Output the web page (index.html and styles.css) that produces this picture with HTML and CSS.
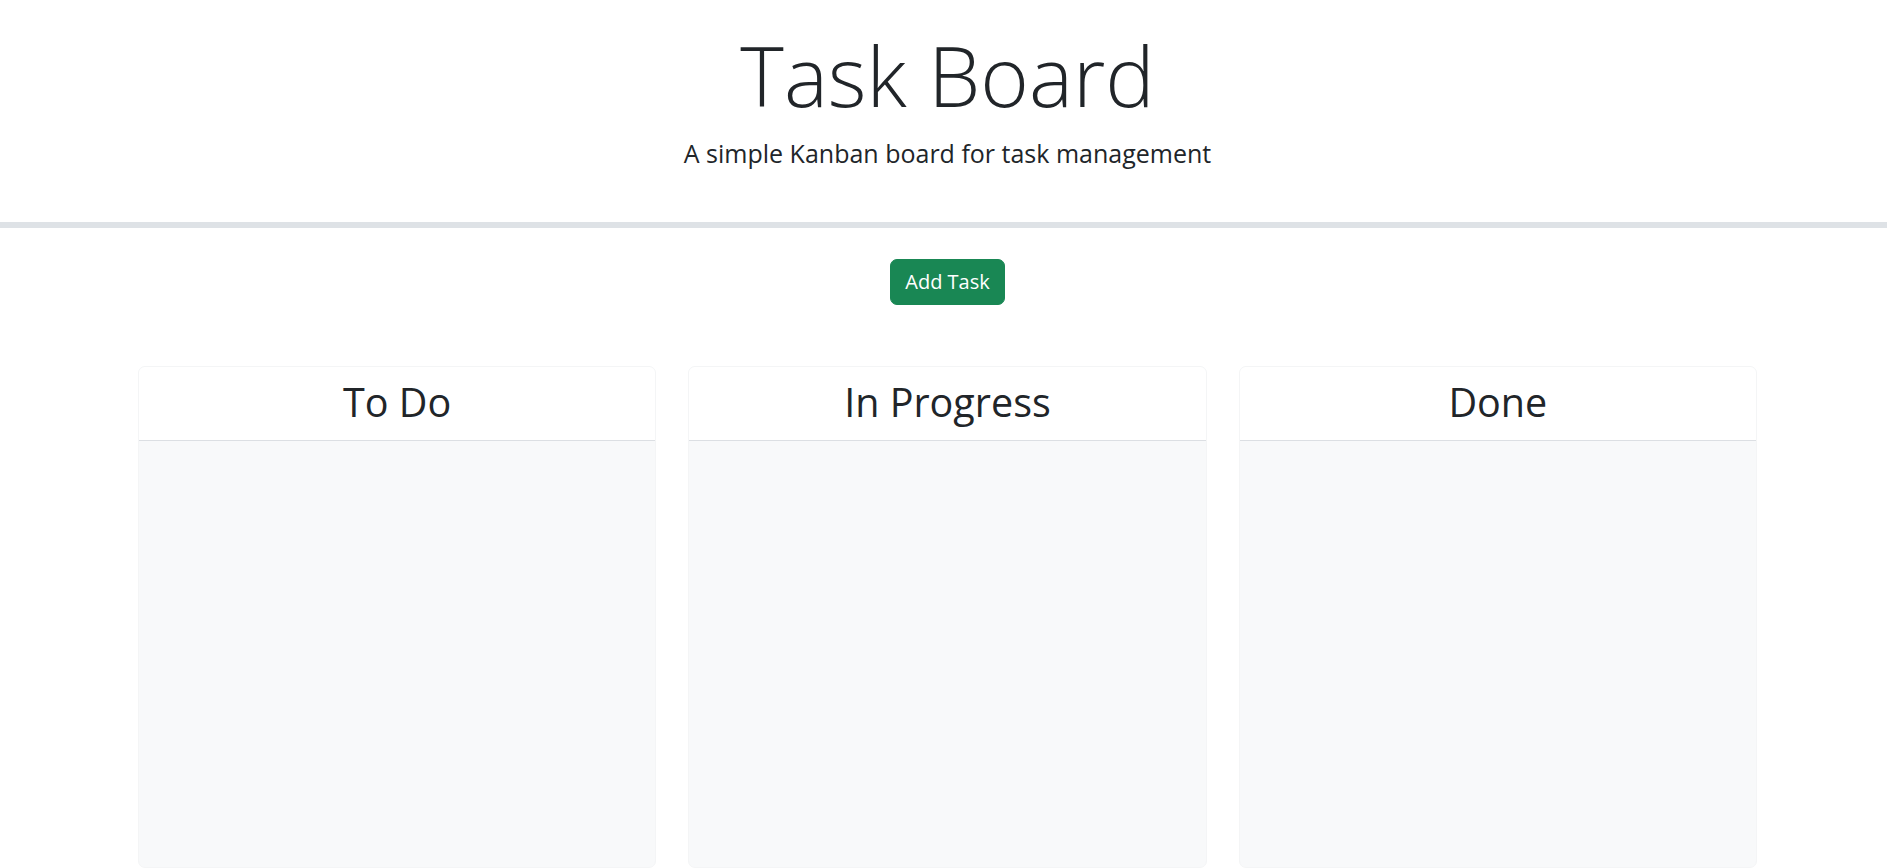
FILE: index.html
```html
<!DOCTYPE html>
<html lang="en">
<head>
<meta charset="utf-8">
<title>Task Board</title>
<link rel="stylesheet" href="styles.css">
</head>
<body>
<header class="page-header">
  <h1 class="title">Task Board</h1>
  <p class="lead">A simple Kanban board for task management</p>
</header>
<main class="board-wrap">
  <div class="actions">
    <button class="btn-add" type="button">Add Task</button>
  </div>
  <div class="board">
    <section class="column">
      <div class="column-header"><h2 class="column-title">To Do</h2></div>
      <div class="column-body"></div>
    </section>
    <section class="column">
      <div class="column-header"><h2 class="column-title">In Progress</h2></div>
      <div class="column-body"></div>
    </section>
    <section class="column">
      <div class="column-header"><h2 class="column-title">Done</h2></div>
      <div class="column-body"></div>
    </section>
  </div>
</main>
</body>
</html>
```
FILE: styles.css
```css
* { box-sizing: border-box; }
html, body { margin: 0; padding: 0; }
body {
  font-family: "Open Sans", "Noto Sans", sans-serif;
  color: #212529;
  background: #fff;
}
.page-header {
  text-align: center;
  padding: 25px 0 51px 8px;
  border-bottom: 6px solid #dee2e6;
}
.title {
  margin: 0;
  font-size: 83px;
  font-weight: 300;
  line-height: 1.2;
}
.lead {
  margin: 10px 0 0;
  font-size: 25px;
  font-weight: 400;
  line-height: 1.44;
}
.board-wrap {
  padding: 31px 130px 0 138px;
}
.actions {
  display: flex;
  justify-content: center;
}
.btn-add {
  font-family: inherit;
  font-size: 20px;
  line-height: 29.6px;
  color: #fff;
  background: #198754;
  border: 1px solid #198754;
  border-radius: 7px;
  padding: 7.2px 14.4px;
}
.board {
  margin-top: 61px;
  display: grid;
  grid-template-columns: repeat(3, 1fr);
  gap: 32px;
}
.column {
  border: 1px solid #f4f5f6;
  border-radius: 7px;
  overflow: hidden;
  background: #f8f9fa;
}
.column-header {
  background: #fff;
  border-bottom: 1px solid #dcdfe3;
  height: 74px;
  display: flex;
  align-items: center;
  justify-content: center;
}
.column-title {
  margin: 0;
  font-size: 39.5px;
  font-weight: 400;
  line-height: 1.2;
}
.column-body {
  height: 426px;
}
```
